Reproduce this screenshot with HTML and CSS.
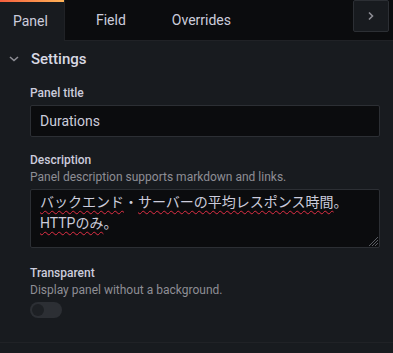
FILE: index.html
```html
<!DOCTYPE html>
<html lang="ja">
<head>
    <meta charset="UTF-8">
    <meta name="viewport" content="width=device-width, initial-scale=1.0">
    <title>Panel options</title>
    <link rel="stylesheet" href="styles.css">
</head>
<body>
    <div class="tabbar">
        <div class="tab active">Panel</div>
        <div class="tab">Field</div>
        <div class="tab">Overrides</div>
        <button class="collapse-btn">
            <svg width="10" height="12" viewBox="0 0 10 12"><path d="M3 2.5 L6.5 6 L3 9.5" fill="none" stroke="#8e8e95" stroke-width="1.6"/></svg>
        </button>
    </div>

    <div class="section">
        <div class="section-header">
            <svg class="chevron" width="12" height="8" viewBox="0 0 12 8"><path d="M2 2 L6 5.5 L10 2" fill="none" stroke="#8e8e95" stroke-width="1.6"/></svg>
            <span>Settings</span>
        </div>

        <div class="fields">
            <div class="field">
                <div class="label">Panel title</div>
                <div class="input">Durations</div>
            </div>

            <div class="field field-wide">
                <div class="label">Description</div>
                <div class="hint">Panel description supports markdown and links.</div>
                <div class="textarea">
                    <span class="misspelled">バックエンド</span>・<span class="misspelled">サーバーの平均レスポンス時間</span>。<br>
                    <span class="misspelled">HTTPのみ</span>。
                    <svg class="grip" width="10" height="10" viewBox="0 0 10 10"><path d="M10 1 L1 10 M10 4 L4 10 M10 7 L7 10" stroke="#5a5d63" stroke-width="1"/></svg>
                </div>
            </div>

            <div class="field">
                <div class="label">Transparent</div>
                <div class="hint">Display panel without a background.</div>
                <div class="switch"><span class="knob"></span></div>
            </div>
        </div>
    </div>
</body>
</html>
```

FILE: styles.css
```css
body {
    margin: 0;
    background: #181b1f;
    color: #ccccdc;
    font-family: Roboto, "Noto Sans CJK JP", sans-serif;
    overflow: hidden;
}
.tabbar {
    display: flex;
    height: 40px;
    background: #0b0c0e;
    border-bottom: 1px solid #202226;
    gap: 16px;
}
.tab {
    display: flex;
    align-items: center;
    padding: 0 15px;
    font-size: 14px;
    color: #ccccdc;
}
.tab.active {
    padding: 0 16px 0 13px;
    background: #181b1f;
    border-right: 1px solid #202226;
    margin-bottom: -1px;
    position: relative;
}
.tab.active::before {
    content: "";
    position: absolute;
    top: 0;
    left: 0;
    right: 0;
    height: 2px;
    background: linear-gradient(90deg, #f55f3e, #ffb357);
}
.collapse-btn {
    margin-left: auto;
    margin-right: 4px;
    width: 36px;
    height: 32px;
    background: #181b1f;
    border: 1px solid #2c2f34;
    border-radius: 2px;
    display: flex;
    align-items: center;
    justify-content: center;
    padding: 0;
}
.section {
    border-bottom: 1px solid #202226;
    padding-bottom: 24px;
}
.section-header {
    height: 36px;
    display: flex;
    align-items: center;
    font-size: 15px;
    font-weight: 500;
    color: #d8d9e3;
}
.chevron {
    margin: 0 11px 0 8px;
}
.fields {
    padding: 8px 13px 0 30px;
}
.field {
    margin-bottom: 15px;
}
.field-wide {
    margin-bottom: 17px;
}
.field:last-child {
    margin-bottom: 0;
}
.label {
    font-size: 12px;
    font-weight: 500;
    line-height: 17px;
    color: #ccccdc;
}
.hint {
    font-size: 12px;
    line-height: 17px;
    color: #8e8e95;
}
.input {
    margin-top: 3px;
    height: 30px;
    line-height: 30px;
    padding: 0 9px;
    background: #0b0c0e;
    border: 1px solid #2c2f34;
    border-radius: 2px;
    font-size: 14px;
}
.textarea {
    position: relative;
    margin-top: 3px;
    height: 49px;
    padding: 2px 9px 6px;
    background: #0b0c0e;
    border: 1px solid #2c2f34;
    border-radius: 2px;
    font-size: 14px;
    line-height: 21px;
}
.misspelled {
    text-decoration: underline wavy #e02f44;
    text-decoration-thickness: 1px;
    text-underline-offset: 3px;
}
.grip {
    position: absolute;
    right: 1px;
    bottom: 1px;
}
.switch {
    margin-top: 3px;
    width: 32px;
    height: 16px;
    border-radius: 8px;
    background: #2c2f34;
    display: flex;
    align-items: center;
}
.knob {
    width: 12px;
    height: 12px;
    margin-left: 2px;
    border-radius: 50%;
    background: #1d2024;
}
```
